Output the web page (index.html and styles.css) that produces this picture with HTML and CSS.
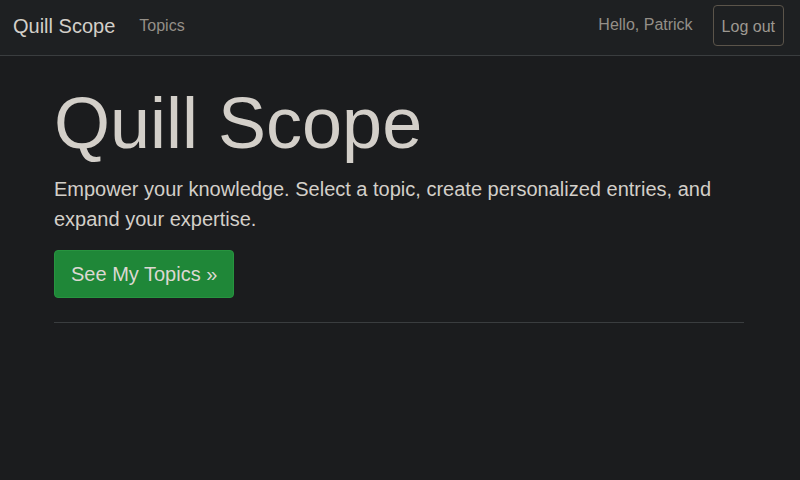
FILE: index.html
```html
<!DOCTYPE html>
<html lang="en">
<head>
<meta charset="utf-8">
<title>Quill Scope</title>
<link rel="stylesheet" href="styles.css">
</head>
<body>
<nav class="navbar">
  <a class="brand" href="#">Quill Scope</a>
  <a class="nav-link" href="#">Topics</a>
  <div class="nav-right">
    <span class="hello">Hello, Patrick</span>
    <button class="logout">Log out</button>
  </div>
</nav>
<main class="container">
  <h1 class="display">Quill Scope</h1>
  <p class="lead">Empower your knowledge. Select a topic, create personalized entries, and expand your expertise.</p>
  <a class="btn-go" href="#">See My Topics &raquo;</a>
  <hr class="rule">
</main>
</body>
</html>
```
FILE: styles.css
```css
* { box-sizing: border-box; }
html, body { margin: 0; padding: 0; }
body {
  background: #1b1c1e;
  color: #d3cfc9;
  font-family: "Liberation Sans", Arial, sans-serif;
  font-size: 16px;
  line-height: 1.5;
  height: 480px;
  overflow: hidden;
}
a { text-decoration: none; }
.navbar {
  height: 56px;
  background: #1e2022;
  border-bottom: 1px solid #3a3d3f;
  display: flex;
  align-items: center;
  padding: 0 16px 0 13px;
}
.brand {
  color: #d3cfc9;
  font-size: 20px;
  line-height: 30px;
  margin-right: 24px;
  margin-top: -4px;
}
.nav-link {
  color: #948f88;
  font-size: 16px;
  line-height: 24px;
  margin-top: -4px;
}
.nav-right {
  margin-left: auto;
  display: flex;
  align-items: center;
}
.hello {
  color: #948f88;
  margin-right: 20px;
  margin-top: -5px;
}
.logout {
  font-family: inherit;
  font-size: 16px;
  line-height: 24px;
  color: #9d9891;
  background: transparent;
  border: 1px solid #5b544a;
  border-radius: 4px;
  padding: 9px 8px 6px;
  margin-top: -5px;
}
.container {
  width: 690px;
  margin-left: 54px;
  padding-top: 24px;
}
.display {
  font-size: 72px;
  font-weight: 400;
  line-height: 1.2;
  margin: 0 0 8px;
  color: #d3cfc9;
}
.lead {
  font-size: 20px;
  line-height: 30px;
  margin: 0 0 16px;
  color: #d3cfc9;
}
.btn-go {
  display: inline-block;
  font-size: 20px;
  line-height: 30px;
  padding: 8px 16px;
  color: #dcd8d2;
  background: #1f8738;
  border: 1px solid #27943f;
  border-radius: 4px;
}
.rule {
  margin: 24px 0 0;
  border: 0;
  border-top: 1px solid #3a3d3f;
}
```
